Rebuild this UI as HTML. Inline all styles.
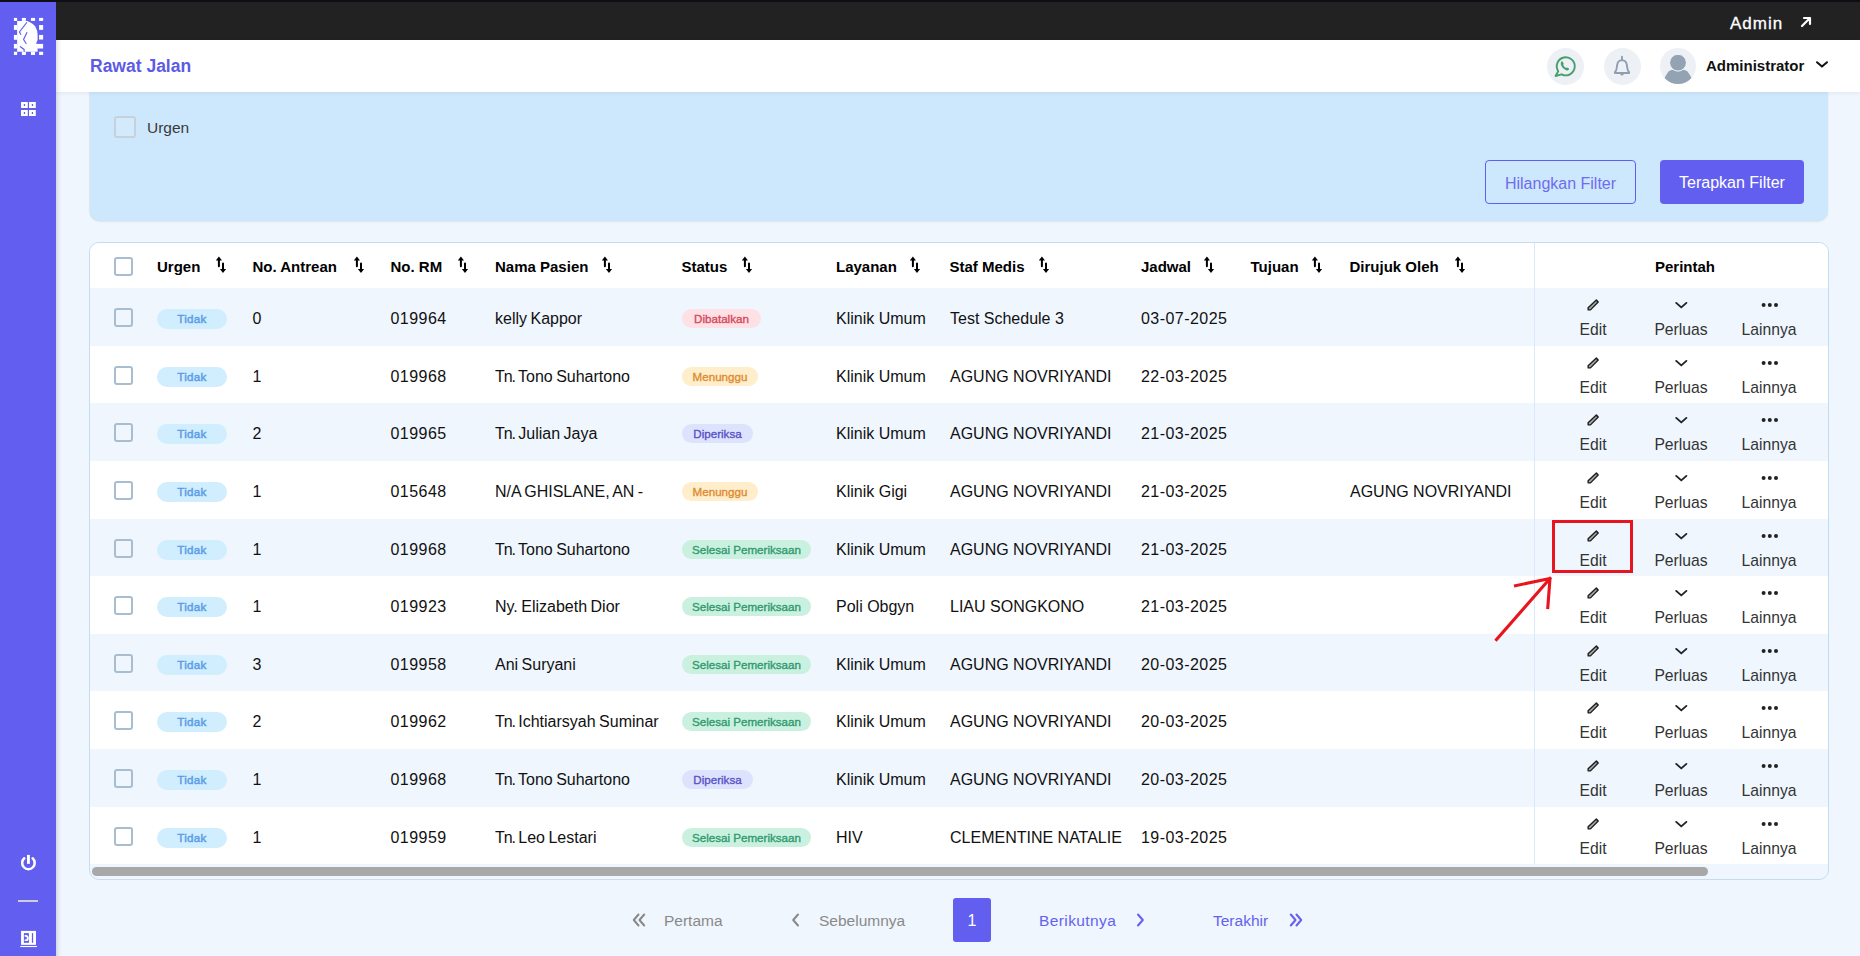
<!DOCTYPE html>
<html><head><meta charset="utf-8">
<style>
*{box-sizing:border-box;margin:0;padding:0}
html,body{width:1860px;height:956px;overflow:hidden}
body{background:#eff6fe;font-family:"Liberation Sans",sans-serif;position:relative;color:#111}
.abs{position:absolute}
svg{position:absolute;overflow:visible}
#topline{left:0;top:0;width:1860px;height:2px;background:#0e0e14}
#side{left:0;top:2px;width:56px;height:954px;background:#625ff0;z-index:5}
#sideshadow{left:56px;top:40px;width:6px;height:916px;background:linear-gradient(90deg,rgba(0,0,0,.12),rgba(0,0,0,.03) 50%,rgba(0,0,0,0));z-index:6}
#dark{left:56px;top:2px;width:1804px;height:38px;background:#222}
#hdr{left:56px;top:40px;width:1804px;height:52px;background:#fff;z-index:3;box-shadow:0 1px 4px rgba(0,0,0,.07)}
#filter{left:90px;top:80px;width:1738px;height:141px;background:#cde8fd;border-radius:0 0 10px 10px;box-shadow:0 1px 2px rgba(0,0,0,.08),-1px 0 1px rgba(0,0,0,.05)}
.btn{position:absolute;height:44px;border-radius:4px;font-size:16px;line-height:46px;text-align:center}
#card{left:89px;top:242px;width:1740px;height:638px;background:#eff6fe;border:1px solid #c6dcf3;border-radius:10px;overflow:hidden}
.row{position:absolute;left:0;width:1738px;height:58px}
.cb{position:absolute;width:19px;height:19px;border:2px solid #a9bdd1;border-radius:3px}
.th{position:absolute;top:15px;font-weight:bold;font-size:15px;color:#000;white-space:nowrap}
.td{position:absolute;top:21.8px;font-size:16px;color:#111;white-space:nowrap}
.si{top:13px}
.dg{letter-spacing:.45px}
.act{position:absolute;top:33px;width:80px;text-align:center;font-size:15.7px;color:#333}
.badge{position:absolute;height:19px;border-radius:10px;font-size:11.6px;font-weight:normal;-webkit-text-stroke:.35px currentColor;line-height:20.5px;text-align:center;white-space:nowrap}
.pg{position:absolute;top:911.5px;font-size:15.5px;white-space:nowrap}
</style></head>
<body>
<div id="topline" class="abs"></div>
<div id="side" class="abs">
  <!-- logo -->
  <svg style="left:10px;top:12px" width="38" height="44" viewBox="0 0 826 956">
    <g fill="#fff">
      <rect x="85" y="85" width="70" height="65"/><rect x="258" y="85" width="87" height="65"/><rect x="455" y="85" width="90" height="65"/><rect x="632" y="85" width="88" height="65"/>
      <rect x="85" y="820" width="70" height="70"/><rect x="258" y="820" width="87" height="70"/><rect x="455" y="820" width="90" height="70"/><rect x="632" y="820" width="88" height="70"/>
      <rect x="85" y="240" width="70" height="105"/><rect x="85" y="455" width="70" height="105"/><rect x="85" y="650" width="70" height="100"/>
      <rect x="632" y="240" width="88" height="105"/><rect x="632" y="455" width="88" height="100"/><rect x="600" y="650" width="120" height="100"/>
      <path d="M155 150 H375 Q500 200 550 270 Q600 360 600 450 L600 560 Q590 610 560 640 L640 660 L600 750 L600 820 H155 Z"/>
    </g>
    <g fill="none" stroke="#625ff0" stroke-width="26" stroke-linecap="round">
      <path d="M360 190 L205 390 L235 440"/>
      <path d="M365 405 L295 555 L350 640"/>
      <path d="M225 710 L305 770 L310 805"/>
    </g>
  </svg>
  <!-- grid -->
  <svg style="left:21px;top:100px" width="15" height="15" viewBox="0 0 15 15">
    <path fill="#fff" fill-rule="evenodd" d="M0 -0.1 H6.8 V6 H0 Z M2.8 2.1 V4 H4.1 V2.1 Z M8 -0.1 H14.8 V6 H8 Z M10.8 2.1 V4 H12.1 V2.1 Z M0 8 H6.8 V14 H0 Z M2.8 10.1 V12 H4.1 V10.1 Z M8 8 H14.8 V14 H8 Z M10.8 10.1 V12 H12.1 V10.1 Z"/>
  </svg>
  <!-- power -->
  <svg style="left:14px;top:846px" width="30" height="30" viewBox="0 0 30 30">
    <path d="M10.25 10.26 A6.25 6.25 0 1 0 18.61 10.26" fill="none" stroke="#fff" stroke-width="2.5" stroke-linecap="round"/>
    <rect x="13" y="6.9" width="2.85" height="8.95" fill="#fff"/>
  </svg>
  <div class="abs" style="left:18px;top:898px;width:20px;height:2px;background:#cfcbd8"></div>
  <!-- exit -->
  <svg style="left:14px;top:922px" width="30" height="30" viewBox="0 0 956 956">
    <rect x="225" y="220" width="475" height="445" fill="#fff"/>
    <rect x="315" y="290" width="160" height="310" fill="#625ff0"/>
    <rect x="570" y="290" width="40" height="310" fill="#625ff0"/>
    <path d="M340 350 H400 Q470 360 470 445 Q470 540 400 545 H340 V490 H380 Q410 480 410 445 Q410 410 380 405 H340 Z" fill="#fff"/>
    <rect x="200" y="700" width="530" height="35" fill="#fff"/>
  </svg>
</div>
<div id="sideshadow" class="abs"></div>
<div id="dark" class="abs"></div>
<div class="abs" style="left:1730px;top:14px;color:#fff;font-size:17px;letter-spacing:1px;-webkit-text-stroke:.3px #fff;z-index:4">Admin</div>
<svg style="left:1800px;top:16px;z-index:4" width="12" height="12" viewBox="0 0 12 12"><path d="M2 10 L10 2 M4 2 H10 V8" fill="none" stroke="#fff" stroke-width="2.2" stroke-linecap="round" stroke-linejoin="round"/></svg>
<div id="hdr" class="abs"></div>
<div class="abs" style="left:90px;top:56px;color:#5d5be6;font-size:17.5px;font-weight:bold;z-index:4">Rawat Jalan</div>
<div class="abs" style="left:1547px;top:48px;width:37px;height:37px;border-radius:50%;background:#edf0f5;z-index:4"></div>
<div class="abs" style="left:1604px;top:48px;width:37px;height:37px;border-radius:50%;background:#edf0f5;z-index:4"></div>
<svg style="left:1660px;top:48px;z-index:4" width="36" height="36" viewBox="0 0 36 36">
  <defs><clipPath id="avc"><circle cx="18" cy="18" r="18"/></clipPath></defs>
  <circle cx="18" cy="18" r="18" fill="#edf0f5"/>
  <g clip-path="url(#avc)">
    <path d="M4.3 30.5 C6.5 26 8.5 23 10.5 22.2 Q18 20.2 25.5 22.2 C27.5 23 29.5 26 31.8 30.5 L32 40 H4 Z" fill="#93a3b4"/>
    <circle cx="18" cy="14.7" r="8.4" fill="#93a3b4" stroke="#f4f6f9" stroke-width="1"/>
  </g>
</svg>
<!-- whatsapp -->
<svg style="left:1554px;top:55px;z-index:4" width="22" height="22" viewBox="0 0 22 22">
  <path d="M4.2 16.2 A9 9 0 1 1 7.6 19.3 L1.6 21 Z" fill="none" stroke="#45a06c" stroke-width="1.9" stroke-linejoin="round"/>
  <path d="M7.4 6.6 Q8.2 6 8.6 6.6 L9.6 8.6 Q9.8 9.2 9.2 9.8 Q9.6 11.6 12 12.9 Q12.6 12.3 13.2 12.6 L14.9 13.6 Q15.3 14.1 14.8 14.8 Q13.6 15.9 12 15.3 Q8.4 13.8 6.9 10 Q6.4 8 7.4 6.6 Z" fill="#45a06c"/>
</svg>
<!-- bell -->
<svg style="left:1600px;top:46px;z-index:4" width="40" height="40" viewBox="0 0 40 40">
  <path d="M14.9 27 L14.9 26.1 Q16.5 24.6 16.8 21.5 L17.2 18.6 Q17.9 14.3 22 14.1 Q26.1 14.3 26.8 18.6 L27.2 21.5 Q27.5 24.6 29.1 26.1 L29.1 27 Z" fill="none" stroke="#8e9fb1" stroke-width="1.9" stroke-linejoin="round"/>
  <path d="M22 10.6 V14" stroke="#8e9fb1" stroke-width="1.9" stroke-linecap="round"/>
  <path d="M19.6 27.3 Q22 32.2 24.4 27.3 Z" fill="#8e9fb1"/>
</svg>
<div class="abs" style="left:1706px;top:57px;font-size:15px;font-weight:bold;color:#111;z-index:4">Administrator</div>
<svg style="left:1815px;top:60px;z-index:4" width="14" height="9" viewBox="0 0 14 9"><path d="M2 2.2 L7 6.6 L12 2.2" fill="none" stroke="#111" stroke-width="2" stroke-linecap="round" stroke-linejoin="round"/></svg>

<div id="filter" class="abs">
  <div class="cb" style="left:24px;top:36px;width:22px;height:22px;border:2px solid #c7d1db;background:#d3eafc"></div>
  <div class="abs" style="left:57px;top:38.5px;font-size:15.5px;color:#3a3a3a">Urgen</div>
  <div class="btn" style="left:1395px;top:80px;width:151px;border:1px solid #625ff0;color:#6f6cef">Hilangkan Filter</div>
  <div class="btn" style="left:1570px;top:80px;width:144px;background:#625ff0;color:#fff">Terapkan Filter</div>
</div>
<div id="card" class="abs">
<div class="row" style="top:0;height:45px;background:#fff">
<div class="cb" style="left:24px;top:14px"></div>
<div class="th" style="left:67px">Urgen</div>
<svg class="si" style="left:124.5px" width="12" height="18" viewBox="0 0 12 18"><path d="M3.9 0.6 L0.8 4.6 H7 Z M8 17 L4.9 13.1 H11.1 Z" fill="#000"/><path d="M3.9 3 V10.3 M8 7.6 V14" stroke="#000" stroke-width="2" stroke-linecap="round"/></svg>
<div class="th" style="left:162.5px">No. Antrean</div>
<svg class="si" style="left:262.5px" width="12" height="18" viewBox="0 0 12 18"><path d="M3.9 0.6 L0.8 4.6 H7 Z M8 17 L4.9 13.1 H11.1 Z" fill="#000"/><path d="M3.9 3 V10.3 M8 7.6 V14" stroke="#000" stroke-width="2" stroke-linecap="round"/></svg>
<div class="th" style="left:300.5px">No. RM</div>
<svg class="si" style="left:367px" width="12" height="18" viewBox="0 0 12 18"><path d="M3.9 0.6 L0.8 4.6 H7 Z M8 17 L4.9 13.1 H11.1 Z" fill="#000"/><path d="M3.9 3 V10.3 M8 7.6 V14" stroke="#000" stroke-width="2" stroke-linecap="round"/></svg>
<div class="th" style="left:405px">Nama Pasien</div>
<svg class="si" style="left:510.5px" width="12" height="18" viewBox="0 0 12 18"><path d="M3.9 0.6 L0.8 4.6 H7 Z M8 17 L4.9 13.1 H11.1 Z" fill="#000"/><path d="M3.9 3 V10.3 M8 7.6 V14" stroke="#000" stroke-width="2" stroke-linecap="round"/></svg>
<div class="th" style="left:591.5px">Status</div>
<svg class="si" style="left:650.5px" width="12" height="18" viewBox="0 0 12 18"><path d="M3.9 0.6 L0.8 4.6 H7 Z M8 17 L4.9 13.1 H11.1 Z" fill="#000"/><path d="M3.9 3 V10.3 M8 7.6 V14" stroke="#000" stroke-width="2" stroke-linecap="round"/></svg>
<div class="th" style="left:746px">Layanan</div>
<svg class="si" style="left:819px" width="12" height="18" viewBox="0 0 12 18"><path d="M3.9 0.6 L0.8 4.6 H7 Z M8 17 L4.9 13.1 H11.1 Z" fill="#000"/><path d="M3.9 3 V10.3 M8 7.6 V14" stroke="#000" stroke-width="2" stroke-linecap="round"/></svg>
<div class="th" style="left:859.5px">Staf Medis</div>
<svg class="si" style="left:948px" width="12" height="18" viewBox="0 0 12 18"><path d="M3.9 0.6 L0.8 4.6 H7 Z M8 17 L4.9 13.1 H11.1 Z" fill="#000"/><path d="M3.9 3 V10.3 M8 7.6 V14" stroke="#000" stroke-width="2" stroke-linecap="round"/></svg>
<div class="th" style="left:1051px">Jadwal</div>
<svg class="si" style="left:1113px" width="12" height="18" viewBox="0 0 12 18"><path d="M3.9 0.6 L0.8 4.6 H7 Z M8 17 L4.9 13.1 H11.1 Z" fill="#000"/><path d="M3.9 3 V10.3 M8 7.6 V14" stroke="#000" stroke-width="2" stroke-linecap="round"/></svg>
<div class="th" style="left:1160.5px">Tujuan</div>
<svg class="si" style="left:1221px" width="12" height="18" viewBox="0 0 12 18"><path d="M3.9 0.6 L0.8 4.6 H7 Z M8 17 L4.9 13.1 H11.1 Z" fill="#000"/><path d="M3.9 3 V10.3 M8 7.6 V14" stroke="#000" stroke-width="2" stroke-linecap="round"/></svg>
<div class="th" style="left:1259.5px">Dirujuk Oleh</div>
<svg class="si" style="left:1364px" width="12" height="18" viewBox="0 0 12 18"><path d="M3.9 0.6 L0.8 4.6 H7 Z M8 17 L4.9 13.1 H11.1 Z" fill="#000"/><path d="M3.9 3 V10.3 M8 7.6 V14" stroke="#000" stroke-width="2" stroke-linecap="round"/></svg>
<div class="th" style="left:1445px;width:300px;text-align:center">Perintah</div>
</div>
<div class="row" style="top:45px;height:58px;background:#eff6fe">
<div class="cb" style="left:24px;top:20px"></div>
<div class="badge" style="left:67px;top:21px;height:20px;width:70px;background:#d0eefd;color:#5c9ce8;letter-spacing:.3px;-webkit-text-stroke:.45px currentColor">Tidak</div>
<div class="td dg" style="left:162.5px">0</div>
<div class="td dg" style="left:300.5px">019964</div>
<div class="td" style="left:405px;word-spacing:-1px">kelly Kappor</div>
<div class="badge" style="left:592px;top:21px;width:79px;background:#fde1e4;color:#d6485c">Dibatalkan</div>
<div class="td" style="left:746px">Klinik Umum</div>
<div class="td" style="left:860px">Test Schedule 3</div>
<div class="td dg" style="left:1051px">03-07-2025</div>
<svg class="ic" style="left:1492px;top:6px" width="22" height="22" viewBox="0 0 956 956"><path d="M625 262 L703 343 L368 690 L270 690 L266 600 Z" fill="#a8aaad" stroke="#1e1e1e" stroke-width="62" stroke-linejoin="round"/></svg>
<svg class="ic" style="left:1584px;top:12.5px" width="14" height="8" viewBox="0 0 14 8"><path d="M2.2 1.9 L7.3 6.4 L12.4 1.9" fill="none" stroke="#222" stroke-width="1.9" stroke-linecap="round" stroke-linejoin="round"/></svg>
<svg class="ic" style="left:1670.5px;top:14px" width="18" height="6" viewBox="0 0 18 6"><circle cx="2.6" cy="3" r="2" fill="#222"/><circle cx="8.8" cy="3" r="2" fill="#222"/><circle cx="15" cy="3" r="2" fill="#222"/></svg>
<div class="act" style="left:1463px">Edit</div>
<div class="act" style="left:1551px">Perluas</div>
<div class="act" style="left:1639px">Lainnya</div>
</div>
<div class="row" style="top:103px;height:57px;background:#fff">
<div class="cb" style="left:24px;top:20px"></div>
<div class="badge" style="left:67px;top:21px;height:20px;width:70px;background:#d0eefd;color:#5c9ce8;letter-spacing:.3px;-webkit-text-stroke:.45px currentColor">Tidak</div>
<div class="td dg" style="left:162.5px">1</div>
<div class="td dg" style="left:300.5px">019968</div>
<div class="td" style="left:405px;word-spacing:-1px"><span style="letter-spacing:-1.1px">Tn.</span> Tono Suhartono</div>
<div class="badge" style="left:592px;top:21px;width:76px;background:#feeecb;color:#e08a30">Menunggu</div>
<div class="td" style="left:746px">Klinik Umum</div>
<div class="td" style="left:860px">AGUNG NOVRIYANDI</div>
<div class="td dg" style="left:1051px">22-03-2025</div>
<svg class="ic" style="left:1492px;top:6px" width="22" height="22" viewBox="0 0 956 956"><path d="M625 262 L703 343 L368 690 L270 690 L266 600 Z" fill="#a8aaad" stroke="#1e1e1e" stroke-width="62" stroke-linejoin="round"/></svg>
<svg class="ic" style="left:1584px;top:12.5px" width="14" height="8" viewBox="0 0 14 8"><path d="M2.2 1.9 L7.3 6.4 L12.4 1.9" fill="none" stroke="#222" stroke-width="1.9" stroke-linecap="round" stroke-linejoin="round"/></svg>
<svg class="ic" style="left:1670.5px;top:14px" width="18" height="6" viewBox="0 0 18 6"><circle cx="2.6" cy="3" r="2" fill="#222"/><circle cx="8.8" cy="3" r="2" fill="#222"/><circle cx="15" cy="3" r="2" fill="#222"/></svg>
<div class="act" style="left:1463px">Edit</div>
<div class="act" style="left:1551px">Perluas</div>
<div class="act" style="left:1639px">Lainnya</div>
</div>
<div class="row" style="top:160px;height:58px;background:#eff6fe">
<div class="cb" style="left:24px;top:20px"></div>
<div class="badge" style="left:67px;top:21px;height:20px;width:70px;background:#d0eefd;color:#5c9ce8;letter-spacing:.3px;-webkit-text-stroke:.45px currentColor">Tidak</div>
<div class="td dg" style="left:162.5px">2</div>
<div class="td dg" style="left:300.5px">019965</div>
<div class="td" style="left:405px;word-spacing:-1px"><span style="letter-spacing:-1.1px">Tn.</span> Julian Jaya</div>
<div class="badge" style="left:592px;top:21px;width:71px;background:#dee3fd;color:#5852c8">Diperiksa</div>
<div class="td" style="left:746px">Klinik Umum</div>
<div class="td" style="left:860px">AGUNG NOVRIYANDI</div>
<div class="td dg" style="left:1051px">21-03-2025</div>
<svg class="ic" style="left:1492px;top:6px" width="22" height="22" viewBox="0 0 956 956"><path d="M625 262 L703 343 L368 690 L270 690 L266 600 Z" fill="#a8aaad" stroke="#1e1e1e" stroke-width="62" stroke-linejoin="round"/></svg>
<svg class="ic" style="left:1584px;top:12.5px" width="14" height="8" viewBox="0 0 14 8"><path d="M2.2 1.9 L7.3 6.4 L12.4 1.9" fill="none" stroke="#222" stroke-width="1.9" stroke-linecap="round" stroke-linejoin="round"/></svg>
<svg class="ic" style="left:1670.5px;top:14px" width="18" height="6" viewBox="0 0 18 6"><circle cx="2.6" cy="3" r="2" fill="#222"/><circle cx="8.8" cy="3" r="2" fill="#222"/><circle cx="15" cy="3" r="2" fill="#222"/></svg>
<div class="act" style="left:1463px">Edit</div>
<div class="act" style="left:1551px">Perluas</div>
<div class="act" style="left:1639px">Lainnya</div>
</div>
<div class="row" style="top:218px;height:58px;background:#fff">
<div class="cb" style="left:24px;top:20px"></div>
<div class="badge" style="left:67px;top:21px;height:20px;width:70px;background:#d0eefd;color:#5c9ce8;letter-spacing:.3px;-webkit-text-stroke:.45px currentColor">Tidak</div>
<div class="td dg" style="left:162.5px">1</div>
<div class="td dg" style="left:300.5px">015648</div>
<div class="td" style="left:405px;word-spacing:-1px">N/A GHISLANE, AN -</div>
<div class="badge" style="left:592px;top:21px;width:76px;background:#feeecb;color:#e08a30">Menunggu</div>
<div class="td" style="left:746px">Klinik Gigi</div>
<div class="td" style="left:860px">AGUNG NOVRIYANDI</div>
<div class="td dg" style="left:1051px">21-03-2025</div>
<div class="td" style="left:1260px">AGUNG NOVRIYANDI</div>
<svg class="ic" style="left:1492px;top:6px" width="22" height="22" viewBox="0 0 956 956"><path d="M625 262 L703 343 L368 690 L270 690 L266 600 Z" fill="#a8aaad" stroke="#1e1e1e" stroke-width="62" stroke-linejoin="round"/></svg>
<svg class="ic" style="left:1584px;top:12.5px" width="14" height="8" viewBox="0 0 14 8"><path d="M2.2 1.9 L7.3 6.4 L12.4 1.9" fill="none" stroke="#222" stroke-width="1.9" stroke-linecap="round" stroke-linejoin="round"/></svg>
<svg class="ic" style="left:1670.5px;top:14px" width="18" height="6" viewBox="0 0 18 6"><circle cx="2.6" cy="3" r="2" fill="#222"/><circle cx="8.8" cy="3" r="2" fill="#222"/><circle cx="15" cy="3" r="2" fill="#222"/></svg>
<div class="act" style="left:1463px">Edit</div>
<div class="act" style="left:1551px">Perluas</div>
<div class="act" style="left:1639px">Lainnya</div>
</div>
<div class="row" style="top:276px;height:57px;background:#eff6fe">
<div class="cb" style="left:24px;top:20px"></div>
<div class="badge" style="left:67px;top:21px;height:20px;width:70px;background:#d0eefd;color:#5c9ce8;letter-spacing:.3px;-webkit-text-stroke:.45px currentColor">Tidak</div>
<div class="td dg" style="left:162.5px">1</div>
<div class="td dg" style="left:300.5px">019968</div>
<div class="td" style="left:405px;word-spacing:-1px"><span style="letter-spacing:-1.1px">Tn.</span> Tono Suhartono</div>
<div class="badge" style="left:592px;top:21px;width:129px;background:#caf0df;color:#2f9a6f">Selesai Pemeriksaan</div>
<div class="td" style="left:746px">Klinik Umum</div>
<div class="td" style="left:860px">AGUNG NOVRIYANDI</div>
<div class="td dg" style="left:1051px">21-03-2025</div>
<svg class="ic" style="left:1492px;top:6px" width="22" height="22" viewBox="0 0 956 956"><path d="M625 262 L703 343 L368 690 L270 690 L266 600 Z" fill="#a8aaad" stroke="#1e1e1e" stroke-width="62" stroke-linejoin="round"/></svg>
<svg class="ic" style="left:1584px;top:12.5px" width="14" height="8" viewBox="0 0 14 8"><path d="M2.2 1.9 L7.3 6.4 L12.4 1.9" fill="none" stroke="#222" stroke-width="1.9" stroke-linecap="round" stroke-linejoin="round"/></svg>
<svg class="ic" style="left:1670.5px;top:14px" width="18" height="6" viewBox="0 0 18 6"><circle cx="2.6" cy="3" r="2" fill="#222"/><circle cx="8.8" cy="3" r="2" fill="#222"/><circle cx="15" cy="3" r="2" fill="#222"/></svg>
<div class="act" style="left:1463px">Edit</div>
<div class="act" style="left:1551px">Perluas</div>
<div class="act" style="left:1639px">Lainnya</div>
</div>
<div class="row" style="top:333px;height:58px;background:#fff">
<div class="cb" style="left:24px;top:20px"></div>
<div class="badge" style="left:67px;top:21px;height:20px;width:70px;background:#d0eefd;color:#5c9ce8;letter-spacing:.3px;-webkit-text-stroke:.45px currentColor">Tidak</div>
<div class="td dg" style="left:162.5px">1</div>
<div class="td dg" style="left:300.5px">019923</div>
<div class="td" style="left:405px;word-spacing:-1px">Ny. Elizabeth Dior</div>
<div class="badge" style="left:592px;top:21px;width:129px;background:#caf0df;color:#2f9a6f">Selesai Pemeriksaan</div>
<div class="td" style="left:746px">Poli Obgyn</div>
<div class="td" style="left:860px">LIAU SONGKONO</div>
<div class="td dg" style="left:1051px">21-03-2025</div>
<svg class="ic" style="left:1492px;top:6px" width="22" height="22" viewBox="0 0 956 956"><path d="M625 262 L703 343 L368 690 L270 690 L266 600 Z" fill="#a8aaad" stroke="#1e1e1e" stroke-width="62" stroke-linejoin="round"/></svg>
<svg class="ic" style="left:1584px;top:12.5px" width="14" height="8" viewBox="0 0 14 8"><path d="M2.2 1.9 L7.3 6.4 L12.4 1.9" fill="none" stroke="#222" stroke-width="1.9" stroke-linecap="round" stroke-linejoin="round"/></svg>
<svg class="ic" style="left:1670.5px;top:14px" width="18" height="6" viewBox="0 0 18 6"><circle cx="2.6" cy="3" r="2" fill="#222"/><circle cx="8.8" cy="3" r="2" fill="#222"/><circle cx="15" cy="3" r="2" fill="#222"/></svg>
<div class="act" style="left:1463px">Edit</div>
<div class="act" style="left:1551px">Perluas</div>
<div class="act" style="left:1639px">Lainnya</div>
</div>
<div class="row" style="top:391px;height:57px;background:#eff6fe">
<div class="cb" style="left:24px;top:20px"></div>
<div class="badge" style="left:67px;top:21px;height:20px;width:70px;background:#d0eefd;color:#5c9ce8;letter-spacing:.3px;-webkit-text-stroke:.45px currentColor">Tidak</div>
<div class="td dg" style="left:162.5px">3</div>
<div class="td dg" style="left:300.5px">019958</div>
<div class="td" style="left:405px;word-spacing:-1px">Ani Suryani</div>
<div class="badge" style="left:592px;top:21px;width:129px;background:#caf0df;color:#2f9a6f">Selesai Pemeriksaan</div>
<div class="td" style="left:746px">Klinik Umum</div>
<div class="td" style="left:860px">AGUNG NOVRIYANDI</div>
<div class="td dg" style="left:1051px">20-03-2025</div>
<svg class="ic" style="left:1492px;top:6px" width="22" height="22" viewBox="0 0 956 956"><path d="M625 262 L703 343 L368 690 L270 690 L266 600 Z" fill="#a8aaad" stroke="#1e1e1e" stroke-width="62" stroke-linejoin="round"/></svg>
<svg class="ic" style="left:1584px;top:12.5px" width="14" height="8" viewBox="0 0 14 8"><path d="M2.2 1.9 L7.3 6.4 L12.4 1.9" fill="none" stroke="#222" stroke-width="1.9" stroke-linecap="round" stroke-linejoin="round"/></svg>
<svg class="ic" style="left:1670.5px;top:14px" width="18" height="6" viewBox="0 0 18 6"><circle cx="2.6" cy="3" r="2" fill="#222"/><circle cx="8.8" cy="3" r="2" fill="#222"/><circle cx="15" cy="3" r="2" fill="#222"/></svg>
<div class="act" style="left:1463px">Edit</div>
<div class="act" style="left:1551px">Perluas</div>
<div class="act" style="left:1639px">Lainnya</div>
</div>
<div class="row" style="top:448px;height:58px;background:#fff">
<div class="cb" style="left:24px;top:20px"></div>
<div class="badge" style="left:67px;top:21px;height:20px;width:70px;background:#d0eefd;color:#5c9ce8;letter-spacing:.3px;-webkit-text-stroke:.45px currentColor">Tidak</div>
<div class="td dg" style="left:162.5px">2</div>
<div class="td dg" style="left:300.5px">019962</div>
<div class="td" style="left:405px;word-spacing:-1px"><span style="letter-spacing:-1.1px">Tn.</span> Ichtiarsyah Suminar</div>
<div class="badge" style="left:592px;top:21px;width:129px;background:#caf0df;color:#2f9a6f">Selesai Pemeriksaan</div>
<div class="td" style="left:746px">Klinik Umum</div>
<div class="td" style="left:860px">AGUNG NOVRIYANDI</div>
<div class="td dg" style="left:1051px">20-03-2025</div>
<svg class="ic" style="left:1492px;top:6px" width="22" height="22" viewBox="0 0 956 956"><path d="M625 262 L703 343 L368 690 L270 690 L266 600 Z" fill="#a8aaad" stroke="#1e1e1e" stroke-width="62" stroke-linejoin="round"/></svg>
<svg class="ic" style="left:1584px;top:12.5px" width="14" height="8" viewBox="0 0 14 8"><path d="M2.2 1.9 L7.3 6.4 L12.4 1.9" fill="none" stroke="#222" stroke-width="1.9" stroke-linecap="round" stroke-linejoin="round"/></svg>
<svg class="ic" style="left:1670.5px;top:14px" width="18" height="6" viewBox="0 0 18 6"><circle cx="2.6" cy="3" r="2" fill="#222"/><circle cx="8.8" cy="3" r="2" fill="#222"/><circle cx="15" cy="3" r="2" fill="#222"/></svg>
<div class="act" style="left:1463px">Edit</div>
<div class="act" style="left:1551px">Perluas</div>
<div class="act" style="left:1639px">Lainnya</div>
</div>
<div class="row" style="top:506px;height:58px;background:#eff6fe">
<div class="cb" style="left:24px;top:20px"></div>
<div class="badge" style="left:67px;top:21px;height:20px;width:70px;background:#d0eefd;color:#5c9ce8;letter-spacing:.3px;-webkit-text-stroke:.45px currentColor">Tidak</div>
<div class="td dg" style="left:162.5px">1</div>
<div class="td dg" style="left:300.5px">019968</div>
<div class="td" style="left:405px;word-spacing:-1px"><span style="letter-spacing:-1.1px">Tn.</span> Tono Suhartono</div>
<div class="badge" style="left:592px;top:21px;width:71px;background:#dee3fd;color:#5852c8">Diperiksa</div>
<div class="td" style="left:746px">Klinik Umum</div>
<div class="td" style="left:860px">AGUNG NOVRIYANDI</div>
<div class="td dg" style="left:1051px">20-03-2025</div>
<svg class="ic" style="left:1492px;top:6px" width="22" height="22" viewBox="0 0 956 956"><path d="M625 262 L703 343 L368 690 L270 690 L266 600 Z" fill="#a8aaad" stroke="#1e1e1e" stroke-width="62" stroke-linejoin="round"/></svg>
<svg class="ic" style="left:1584px;top:12.5px" width="14" height="8" viewBox="0 0 14 8"><path d="M2.2 1.9 L7.3 6.4 L12.4 1.9" fill="none" stroke="#222" stroke-width="1.9" stroke-linecap="round" stroke-linejoin="round"/></svg>
<svg class="ic" style="left:1670.5px;top:14px" width="18" height="6" viewBox="0 0 18 6"><circle cx="2.6" cy="3" r="2" fill="#222"/><circle cx="8.8" cy="3" r="2" fill="#222"/><circle cx="15" cy="3" r="2" fill="#222"/></svg>
<div class="act" style="left:1463px">Edit</div>
<div class="act" style="left:1551px">Perluas</div>
<div class="act" style="left:1639px">Lainnya</div>
</div>
<div class="row" style="top:564px;height:57px;background:#fff">
<div class="cb" style="left:24px;top:20px"></div>
<div class="badge" style="left:67px;top:21px;height:20px;width:70px;background:#d0eefd;color:#5c9ce8;letter-spacing:.3px;-webkit-text-stroke:.45px currentColor">Tidak</div>
<div class="td dg" style="left:162.5px">1</div>
<div class="td dg" style="left:300.5px">019959</div>
<div class="td" style="left:405px;word-spacing:-1px"><span style="letter-spacing:-1.1px">Tn.</span> Leo Lestari</div>
<div class="badge" style="left:592px;top:21px;width:129px;background:#caf0df;color:#2f9a6f">Selesai Pemeriksaan</div>
<div class="td" style="left:746px">HIV</div>
<div class="td" style="left:860px">CLEMENTINE NATALIE</div>
<div class="td dg" style="left:1051px">19-03-2025</div>
<svg class="ic" style="left:1492px;top:6px" width="22" height="22" viewBox="0 0 956 956"><path d="M625 262 L703 343 L368 690 L270 690 L266 600 Z" fill="#a8aaad" stroke="#1e1e1e" stroke-width="62" stroke-linejoin="round"/></svg>
<svg class="ic" style="left:1584px;top:12.5px" width="14" height="8" viewBox="0 0 14 8"><path d="M2.2 1.9 L7.3 6.4 L12.4 1.9" fill="none" stroke="#222" stroke-width="1.9" stroke-linecap="round" stroke-linejoin="round"/></svg>
<svg class="ic" style="left:1670.5px;top:14px" width="18" height="6" viewBox="0 0 18 6"><circle cx="2.6" cy="3" r="2" fill="#222"/><circle cx="8.8" cy="3" r="2" fill="#222"/><circle cx="15" cy="3" r="2" fill="#222"/></svg>
<div class="act" style="left:1463px">Edit</div>
<div class="act" style="left:1551px">Perluas</div>
<div class="act" style="left:1639px">Lainnya</div>
</div>
<div class="abs" style="left:1444px;top:0;width:1px;height:621px;background:#dae8f7"></div>
<div class="abs" style="left:2px;top:624px;width:1616px;height:9px;border-radius:5px;background:#a8a8a8"></div>
</div>

<!-- pagination -->
<svg style="left:632px;top:913px" width="14" height="14" viewBox="0 0 14 14"><path d="M6.5 1.5 L1.8 7 L6.5 12.5 M12.2 1.5 L7.5 7 L12.2 12.5" fill="none" stroke="#888" stroke-width="2" stroke-linejoin="round" stroke-linecap="round"/></svg>
<div class="pg" style="left:664px;color:#8a8a8a">Pertama</div>
<svg style="left:791px;top:913px" width="9" height="14" viewBox="0 0 9 14"><path d="M7 1.5 L2.2 7 L7 12.5" fill="none" stroke="#888" stroke-width="2" stroke-linejoin="round" stroke-linecap="round"/></svg>
<div class="pg" style="left:819px;color:#8a8a8a">Sebelumnya</div>
<div class="abs" style="left:953px;top:898px;width:38px;height:44px;background:#625ff0;border-radius:3px;color:#fff;font-size:16px;text-align:center;line-height:46px">1</div>
<div class="pg" style="left:1039px;color:#6562ee;letter-spacing:.4px">Berikutnya</div>
<svg style="left:1136px;top:913px" width="9" height="14" viewBox="0 0 9 14"><path d="M2 1.5 L6.8 7 L2 12.5" fill="none" stroke="#6562ee" stroke-width="2.1" stroke-linejoin="round" stroke-linecap="round"/></svg>
<div class="pg" style="left:1213px;color:#6562ee">Terakhir</div>
<svg style="left:1289px;top:913px" width="14" height="14" viewBox="0 0 14 14"><path d="M1.8 1.5 L6.5 7 L1.8 12.5 M7.5 1.5 L12.2 7 L7.5 12.5" fill="none" stroke="#6562ee" stroke-width="2.1" stroke-linejoin="round" stroke-linecap="round"/></svg>

<!-- red annotation -->
<div class="abs" style="left:1552px;top:520px;width:81px;height:53px;border:3px solid #e8141e;z-index:9"></div>
<svg style="left:0;top:0;z-index:9" width="1860" height="956" viewBox="0 0 1860 956">
  <path d="M1496.5 639.5 L1550 578.5 M1515.5 585.7 L1550 578.5 L1547.8 607.5" fill="none" stroke="#e8141e" stroke-width="3.1" stroke-linecap="square" stroke-linejoin="round"/>
</svg>
</body></html>
